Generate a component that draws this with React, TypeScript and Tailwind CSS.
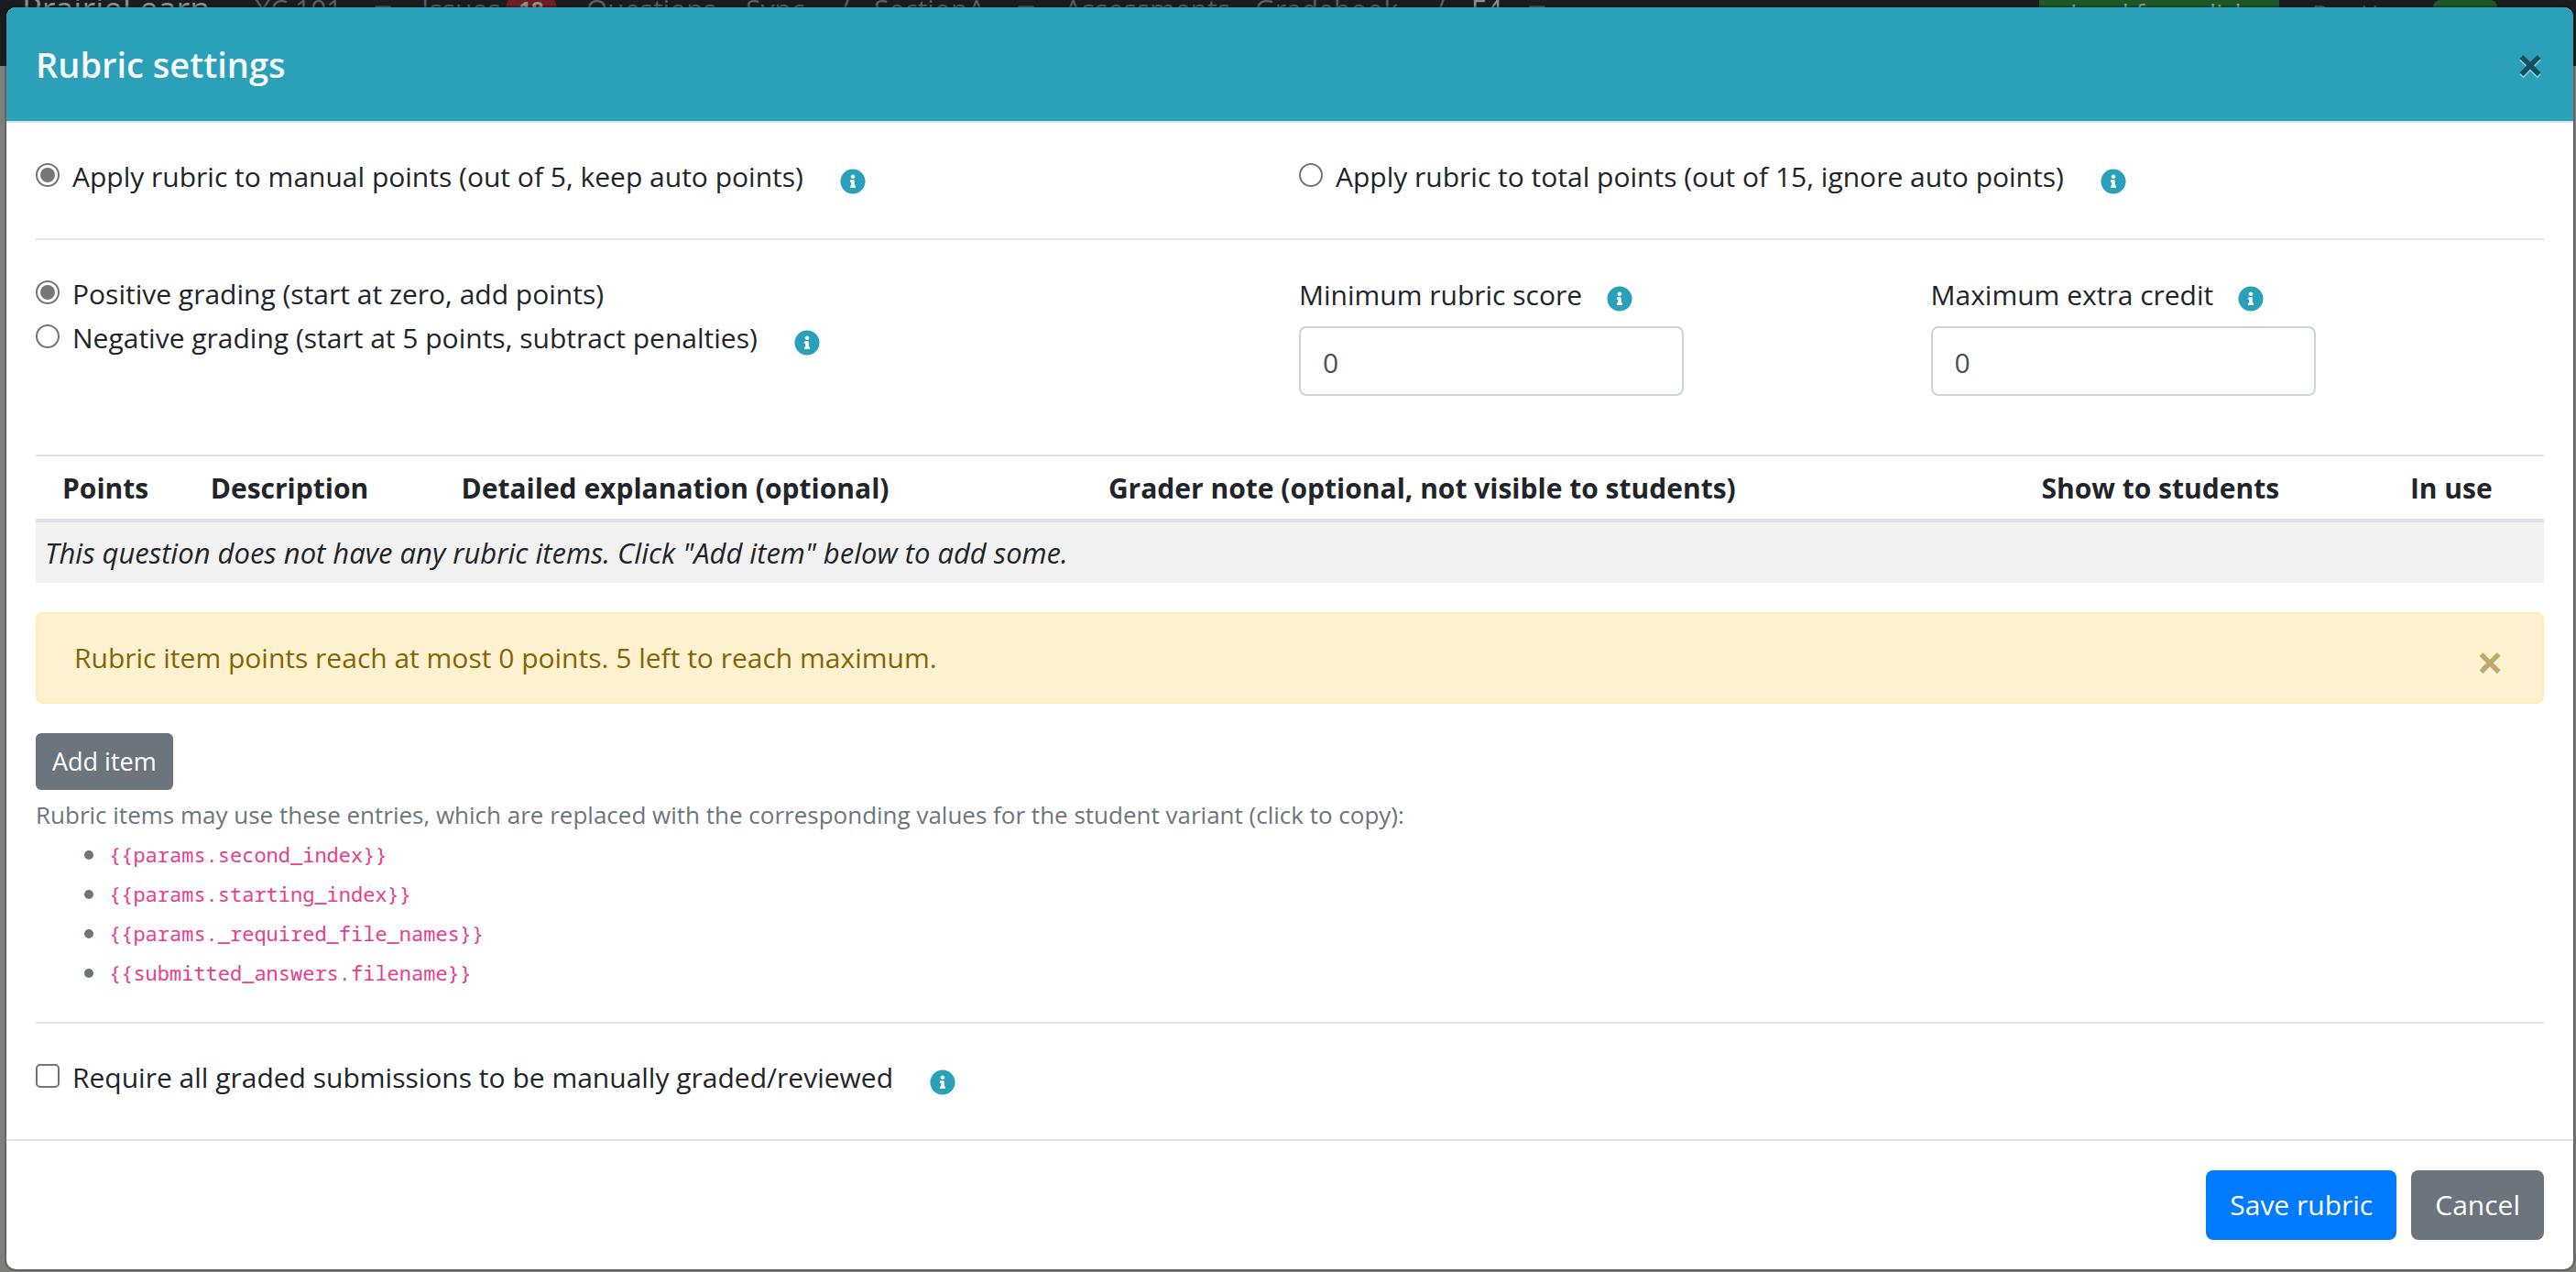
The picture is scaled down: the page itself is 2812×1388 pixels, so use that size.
import type { ReactNode } from 'react';
import { FaCaretDown, FaInfoCircle } from 'react-icons/fa';

function InfoButton({ label }: { label: string }) {
  return (
    <button type="button" aria-label={label} className="flex h-16 shrink-0 items-center text-[28px] text-[#2ba1b9]">
      <FaInfoCircle />
    </button>
  );
}

type ChoiceProps = {
  id: string;
  name?: string;
  type: 'radio' | 'checkbox';
  checked?: boolean;
  info?: string;
  children: ReactNode;
};

function Choice({ id, name, type, checked, info, children }: ChoiceProps) {
  return (
    <div className="flex items-start">
      {type === 'radio' ? (
        <input
          id={id}
          name={name}
          type="radio"
          defaultChecked={checked}
          className="mt-3 mr-[14px] grid size-[26px] shrink-0 appearance-none place-content-center rounded-full border-2 border-[#767676] bg-white before:size-4 before:rounded-full checked:before:bg-[#767676]"
        />
      ) : (
        <input
          id={id}
          type="checkbox"
          className="mt-3 mr-[14px] size-[26px] shrink-0 appearance-none rounded-[5px] border-2 border-[#767676] bg-white checked:bg-[#767676]"
        />
      )}
      <label htmlFor={id} className="mr-10 leading-[54px]">
        {children}
      </label>
      {info && <InfoButton label={info} />}
    </div>
  );
}

function ScoreField({ id, label }: { id: string; label: string }) {
  return (
    <div>
      <div className="flex h-[62px] items-start">
        <label htmlFor={id} className="mr-[27px] leading-[56px]">
          {label}
        </label>
        <InfoButton label={`About ${label.toLowerCase()}`} />
      </div>
      <input
        id={id}
        type="text"
        inputMode="numeric"
        defaultValue="0"
        className="block h-[76px] w-full max-w-[420px] rounded-lg border-2 border-[#ced4da] bg-white px-6 pt-0.5 text-[#495057]"
      />
    </div>
  );
}

function Backdrop() {
  return (
    <div aria-hidden="true" className="absolute inset-0 overflow-hidden bg-[#7f7e7d]">
      <div className="-mt-[52px] flex h-[124px] items-center bg-[#1a1d20] whitespace-nowrap text-[#5b5e60]">
        <span className="ml-[24px] w-[254px] text-[36px] text-[#8d8e8f]">PrairieLearn</span>
        <span className="w-[124px]">XC 101</span>
        <FaCaretDown className="mr-[26px] w-[32px]" />
        <span className="w-[92px]">Issues</span>
        <span className="mr-[32px] w-[56px] rounded-full bg-[#6e1d23] text-center text-[24px] leading-9 font-bold text-[#8d8e8f]">18</span>
        <span className="w-[174px]">Questions</span>
        <span className="w-[102px]">Sync</span>
        <span className="w-[38px]">/</span>
        <span className="w-[150px]">SectionA</span>
        <FaCaretDown className="mr-[26px] w-[32px]" />
        <span className="w-[208px]">Assessments</span>
        <span className="w-[196px]">Gradebook</span>
        <span className="w-[40px]">/</span>
        <span className="w-[56px] text-[#8d8e8f]">E4</span>
        <FaCaretDown className="w-[32px]" />
        <div className="ml-auto flex items-center pt-2 text-[28px]">
          <span className="w-[262px] bg-[#1f5628] py-3 text-center text-[#8d9a8f]">Load from disk</span>
          <span className="ml-9 w-[132px] text-[26px]">Dev User</span>
          <span className="mr-[86px] h-7 w-[70px] rounded-lg bg-[#1f5628]" />
        </div>
      </div>
    </div>
  );
}

const placeholders = [
  '{{params.second_index}}',
  '{{params.starting_index}}',
  '{{params._required_file_names}}',
  '{{submitted_answers.filename}}',
];

export default function App() {
  return (
    <div className="relative min-h-screen pt-1.5 pr-px pb-px pl-[5px] font-['Open_Sans',sans-serif] text-[30px] leading-[48px] text-[#212529]">
      <Backdrop />
      <div
        role="dialog"
        aria-labelledby="rubric-title"
        className="relative rounded-[12px] border-2 border-black/20 bg-white bg-clip-padding"
      >
        <header className="flex items-start justify-between rounded-t-[10px] border-b-2 border-[#dee2e6] bg-[#2ba1b9] p-8">
          <h1 id="rubric-title" className="text-[38px] leading-[60px] font-semibold text-[#f8f9fa]">
            Rubric settings
          </h1>
          <button
            type="button"
            aria-label="Close"
            className="text-[52px] leading-[60px] font-bold text-black opacity-50 [text-shadow:0_2px_0_#fff]"
          >
            ×
          </button>
        </header>

        <form>
          <div className="p-8">
            <div className="grid h-[62px] grid-cols-2 gap-5">
              <Choice id="manual-points" name="scope" type="radio" checked info="About manual points">
                Apply rubric to manual points (out of 5, keep auto points)
              </Choice>
              <Choice id="total-points" name="scope" type="radio" info="About total points">
                Apply rubric to total points (out of 15, ignore auto points)
              </Choice>
            </div>

            <hr className="my-8 border-t-2 border-[#e5e5e5]" />

            <div className="grid grid-cols-4 gap-5">
              <div className="col-span-2">
                <div className="h-12">
                  <Choice id="positive" name="grading" type="radio" checked>
                    Positive grading (start at zero, add points)
                  </Choice>
                </div>
                <Choice id="negative" name="grading" type="radio" info="About negative grading">
                  Negative grading (start at 5 points, subtract penalties)
                </Choice>
              </div>
              <ScoreField id="min-score" label="Minimum rubric score" />
              <ScoreField id="max-credit" label="Maximum extra credit" />
            </div>

            <table className="mt-16 w-full table-fixed border-collapse text-left">
              <colgroup>
                <col className="w-[6.6%]" />
                <col className="w-[10%]" />
                <col className="w-[25.8%]" />
                <col className="w-[37.2%]" />
                <col className="w-[14.7%]" />
                <col className="w-[5.7%]" />
              </colgroup>
              <thead>
                <tr className="h-[71px] border-t-2 border-b-4 border-[#dee2e6] whitespace-nowrap">
                  <th className="pt-0.5 pl-[29px]">Points</th>
                  <th className="px-2.5 pt-0.5">Description</th>
                  <th className="px-2.5 pt-0.5">Detailed explanation (optional)</th>
                  <th className="px-2.5 pt-0.5">Grader note (optional, not visible to students)</th>
                  <th className="px-2.5 pt-0.5">Show to students</th>
                  <th className="px-2.5 pt-0.5">In use</th>
                </tr>
              </thead>
              <tbody>
                <tr className="h-[68px] bg-[#f2f2f2]">
                  <td colSpan={6} className="px-2.5 text-[31px] italic">
                    This question does not have any rubric items. Click "Add item" below to add some.
                  </td>
                </tr>
              </tbody>
            </table>

            <div
              role="alert"
              className="mt-8 flex items-start justify-between rounded-lg border-2 border-[#ffeeba] bg-[#fff2d0] py-6 pr-[42px] pl-10 text-[#856404]"
            >
              <p>Rubric item points reach at most 0 points. 5 left to reach maximum.</p>
              <button
                type="button"
                aria-label="Dismiss"
                className="-mb-2 text-[52px] leading-[56px] font-bold opacity-50 [text-shadow:0_2px_0_#fff]"
              >
                ×
              </button>
            </div>

            <button type="button" className="mt-8 block h-[62px] rounded-md bg-[#6c757d] px-[18px] text-[27px] text-white">
              Add item
            </button>
            <div className="mt-1.5 text-[26px] leading-[43px] text-[#6c757d]">
              <p>
                Rubric items may use these entries, which are replaced with the corresponding values for the student
                variant (click to copy):
              </p>
              <ul className="pl-[53px]">
                {placeholders.map((text) => (
                  <li
                    key={text}
                    className="flex items-center gap-[17px] before:size-2.5 before:rounded-full before:bg-[#6c757d]"
                  >
                    <code className="font-['Noto_Sans_Mono','DejaVu_Sans_Mono',monospace] text-[22px] text-[#e83e8c]">
                      {text}
                    </code>
                  </li>
                ))}
              </ul>
            </div>

            <hr className="my-8 border-t-2 border-[#e5e5e5]" />

            <div className="h-[62px]">
              <Choice id="require-manual" type="checkbox" info="About manual grading">
                Require all graded submissions to be manually graded/reviewed
              </Choice>
            </div>
          </div>

          <footer className="flex justify-end gap-4 border-t-2 border-[#dee2e6] p-8 text-white">
            <button type="submit" className="h-[76px] rounded-lg bg-[#007bff] px-[26px]">
              Save rubric
            </button>
            <button type="button" className="h-[76px] rounded-lg bg-[#6c757d] px-[26px]">
              Cancel
            </button>
          </footer>
        </form>
      </div>
    </div>
  );
}
